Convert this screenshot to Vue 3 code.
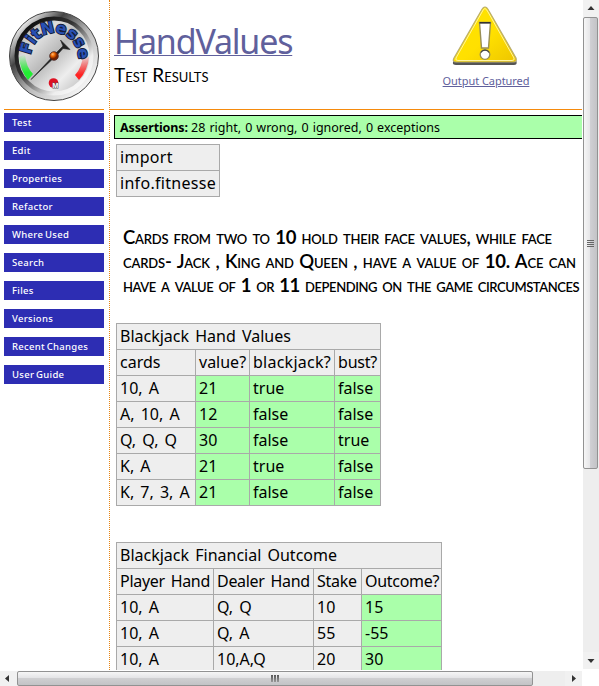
<script setup>
const links = ['Test', 'Edit', 'Properties', 'Refactor', 'Where Used', 'Search', 'Files', 'Versions', 'Recent Changes', 'User Guide']
const hands = [
  ['10, A', '21', 'true', 'false'],
  ['A, 10, A', '12', 'false', 'false'],
  ['Q, Q, Q', '30', 'false', 'true'],
  ['K, A', '21', 'true', 'false'],
  ['K, 7, 3, A', '21', 'false', 'false'],
]
const outcomes = [
  ['10, A', 'Q, Q', '10', '15'],
  ['10, A', 'Q, A', '55', '-55'],
  ['10, A', '10,A,Q', '20', '30'],
]
</script>

<template>
  <div class="window">
    <div class="viewport">
      <aside class="sidebar">
        <div class="logo">
          <svg width="92" height="92" viewBox="8 10 92 92">
            <defs>
              <linearGradient id="rim" x1="0" y1="0" x2="1" y2="1">
                <stop offset="0" stop-color="#777" />
                <stop offset=".13" stop-color="#fafafa" />
                <stop offset=".32" stop-color="#444" />
                <stop offset=".55" stop-color="#bbb" />
                <stop offset=".85" stop-color="#f4f4f4" />
                <stop offset="1" stop-color="#222" />
              </linearGradient>
              <linearGradient id="bevel" x1="0" y1="0" x2="1" y2="1">
                <stop offset="0" stop-color="#000" />
                <stop offset=".4" stop-color="#333" />
                <stop offset=".75" stop-color="#eee" />
                <stop offset="1" stop-color="#fff" />
              </linearGradient>
              <linearGradient id="face" x1="0" y1="0" x2="1" y2="1">
                <stop offset="0" stop-color="#999" />
                <stop offset=".3" stop-color="#ddd" />
                <stop offset=".48" stop-color="#bbb" />
                <stop offset=".7" stop-color="#eee" />
                <stop offset="1" stop-color="#aaa" />
              </linearGradient>
              <linearGradient id="green" x1="0" y1="0" x2="0" y2="1">
                <stop offset="0" stop-color="#2e3" stop-opacity="0" />
                <stop offset=".7" stop-color="#2e3" />
              </linearGradient>
              <linearGradient id="red" x1="0" y1="0" x2="0" y2="1">
                <stop offset="0" stop-color="#f22" stop-opacity="0" />
                <stop offset=".8" stop-color="#f22" />
              </linearGradient>
              <radialGradient id="hub" cx=".35" cy=".3">
                <stop offset="0" stop-color="#fb7" />
                <stop offset=".5" stop-color="#e60" />
                <stop offset="1" stop-color="#720" />
              </radialGradient>
              <path id="arc" d="M31 55A23.500 23.500 0 0 1 78 58" />
            </defs>
            <circle cx="54" cy="56" r="44.5" fill="url(#rim)" stroke="#444" stroke-width="1" />
            <circle cx="54" cy="56" r="37.5" fill="url(#face)" stroke="url(#bevel)" stroke-width="4" />
            <path d="M19 57Q20 70 28 80L33 74Q26 67 25 54Z" fill="url(#green)" />
            <path d="M89 57Q88 70 79 80L75 75Q82 68 83 54Z" fill="url(#red)" />
            <text class="logo-text"><textPath href="#arc" textLength="75" lengthAdjust="spacing">FitNesse</textPath></text>
            <path d="M31 79.500L57 52L63 46L60.500 40L66 45.500L70 49.500L63 48.500L58 54Z" fill="#222" stroke="#222" stroke-width=".6" />
            <circle cx="54" cy="56" r="4.300" fill="url(#hub)" stroke="#422" stroke-width=".8" />
            <circle cx="53.500" cy="83" r="4.800" fill="#d12" />
            <text x="52.500" y="88" class="mark">M</text>
          </svg>
        </div>
        <nav>
          <a v-for="link in links" :key="link">{{ link }}</a>
        </nav>
      </aside>
      <main>
        <header>
          <div class="heading">
            <h1><a>HandValues</a></h1>
            <div class="subtitle">Test Results</div>
          </div>
          <div class="captured">
            <svg width="70" height="62" viewBox="0 0 70 62">
              <defs>
                <linearGradient id="yellow" x1="0" y1="0" x2="1" y2="1">
                  <stop offset="0" stop-color="#ffe500" />
                  <stop offset=".55" stop-color="#ffe000" />
                  <stop offset="1" stop-color="#edc500" />
                </linearGradient>
              </defs>
              <path d="M35 5Q37 4 39 8L66 55Q68 60 64 60H6Q1 60 4 55L31 8Q33 5 35 5Z" fill="#555" />
              <path d="M35 2Q37 2 39 6L66 53Q67 57 64 57H6Q2 57 4 53L31 6Q33 2 35 2Z" fill="url(#yellow)" stroke="#b9ad70" stroke-width="1.200" />
              <path d="M35 3.500Q36.500 4 38 7L64 53Q65 55.500 62 55.500H8Q5 55.500 6 53L32 7Q33.500 3.500 35 3.500Z" fill="none" stroke="#fff3a0" stroke-width="1" />
              <path d="M29.500 17.500H40.500L38.500 43H31.500Z" fill="#fff" stroke="#998f55" stroke-width="1.400" />
              <path d="M29.500 17.800H40.500" stroke="#333" stroke-width="1.600" />
              <circle cx="35" cy="49.500" r="4.800" fill="#fff" stroke="#998f55" stroke-width="1.300" />
              <path d="M30.800 47.500A5 5 0 0 1 39.200 47.500" fill="none" stroke="#444" stroke-width="1.300" />
            </svg>
            <a>Output Captured</a>
          </div>
        </header>
        <div class="assertions"><b>Assertions:</b> <span>28 right, 0 wrong, 0 ignored, 0 exceptions</span></div>
        <table class="import">
          <tbody>
            <tr><td>import</td></tr>
            <tr><td>info.fitnesse</td></tr>
          </tbody>
        </table>
        <div class="prose">
          <div class="l1">Cards from two to <b>10</b> hold their face values, while face</div>
          <div class="l2">cards- Jack , King and Queen , have a value of <b>10.</b> Ace can</div>
          <div class="l3">have a value of <b>1</b> or <b>11</b> depending on the game circumstances</div>
        </div>
        <table class="hands">
          <colgroup><col class="c79" /><col class="c54" /><col class="c85" /><col class="c46" /></colgroup>
          <tbody>
            <tr><td colspan="4">Blackjack Hand Values</td></tr>
            <tr><td>cards</td><td>value?</td><td class="wide">blackjack?</td><td class="wide">bust?</td></tr>
            <tr v-for="(row, r) in hands" :key="r">
              <td v-for="(cell, c) in row" :key="c" :class="{ pass: c > 0 }">{{ cell }}</td>
            </tr>
          </tbody>
        </table>
        <table class="outcomes">
          <colgroup><col class="c97" /><col class="c100" /><col class="c48" /><col class="c80" /></colgroup>
          <tbody>
            <tr><td colspan="4">Blackjack Financial Outcome</td></tr>
            <tr class="tight"><td>Player Hand</td><td>Dealer Hand</td><td>Stake</td><td>Outcome?</td></tr>
            <tr v-for="(row, r) in outcomes" :key="r">
              <td v-for="(cell, c) in row" :key="c" :class="{ pass: c === 3 }">{{ cell }}</td>
            </tr>
          </tbody>
        </table>
      </main>
    </div>
    <div class="vbar">
      <svg class="btn" width="16" height="17" viewBox="0 0 16 17"><path d="M4.500 10L8 6L11.500 10Z" fill="#333" /></svg>
      <div class="thumb"><i></i><i></i><i></i><i></i></div>
      <div class="space"></div>
      <svg class="btn" width="16" height="17" viewBox="0 0 16 17"><path d="M4.500 7L8 11L11.500 7Z" fill="#333" /></svg>
    </div>
    <div class="hbar">
      <svg class="btn" width="17" height="15" viewBox="0 0 17 15"><path d="M9 4L5 7.500L9 11Z" fill="#333" /></svg>
      <div class="thumb"><i></i><i></i><i></i></div>
      <div class="space"></div>
      <svg class="btn" width="17" height="15" viewBox="0 0 17 15"><path d="M7 4L11 7.500L7 11Z" fill="#333" /></svg>
    </div>
  </div>
</template>

<style>
body { margin: 0; background: #fff; overflow: hidden; }
</style>

<style scoped>
.window {
  width: 599px; height: 686px; display: grid;
  grid-template-columns: 583px 16px; grid-template-rows: 670px 16px;
  font-family: "Noto Sans", "Open Sans", sans-serif; color: #000; overflow: hidden;
}
.viewport { display: flex; width: 582px; height: 670px; overflow: hidden; white-space: nowrap; }
.sidebar { width: 109px; flex: none; border-right: 1px dotted #e88410; box-sizing: content-box; }
.logo { margin: 0 5px 0 4px; padding: 10px 0 0 4px; height: 99px; border-bottom: 1px solid #f58a0c; }
.logo svg { display: block; }
.logo-text { font: bold 16px "DejaVu Sans", sans-serif; fill: #2850b4; stroke: #151c38; stroke-width: 1.800px; paint-order: stroke; }
.mark { font: bold 7px "Liberation Sans", sans-serif; fill: #fff; stroke: #555; stroke-width: 1px; paint-order: stroke; }
nav { padding: 3px 5px 0 4px; display: flex; flex-direction: column; gap: 9px; }
nav a { height: 19px; line-height: 20px; box-sizing: border-box; background: #2d2db3; color: #fff; font-size: 9.500px; font-weight: 500; letter-spacing: .3px; word-spacing: -1px; padding-left: 8px; }
main { flex: none; width: 620px; }
header { height: 109px; border-bottom: 1px solid #f58a0c; display: flex; }
.heading { width: 329px; padding: 20px 0 0 4px; }
h1 { margin: 0; font-size: 34px; line-height: 42px; font-weight: 400; letter-spacing: -1.200px; color: #60609c; }
h1 a { text-decoration: underline; text-decoration-thickness: 1px; text-underline-offset: 1px; }
.subtitle { font-family: Lato, sans-serif; font-size: 19px; line-height: 24px; font-variant: small-caps; padding-top: 1px; }
.captured { width: 86px; padding-top: 5px; display: flex; flex-direction: column; align-items: center; }
.captured svg { margin-left: -3px; }
.captured a { color: #60609c; font-size: 11px; line-height: 16px; padding-top: 6px; text-decoration: underline; letter-spacing: -.06px; }
.assertions { margin: 5px 0 0 4px; height: 22px; line-height: 24px; border: 1px solid #000; background: #afa; padding-left: 5px; font-size: 12.500px; }
.assertions b { letter-spacing: -.12px; }
.assertions span { word-spacing: .8px; }
table { border-collapse: collapse; table-layout: fixed; margin-left: 6px; font-size: 16px; word-spacing: 2px; }
td { height: 25px; line-height: 25px; padding: 0 0 0 3px; border: 1px solid #a9a9a9; background: #eee; }
td.pass { background: #afa; }
td.wide { letter-spacing: .25px; }
.hands tr:nth-child(2) .wide:last-child { letter-spacing: -.2px; }
.tight td { letter-spacing: -.3px; }
.import { width: 104px; margin-top: 5px; letter-spacing: .3px; }
.hands { width: 265px; margin-top: 26px; }
.outcomes { width: 326px; margin-top: 36px; }
.c79 { width: 79px; } .c54 { width: 54px; } .c85 { width: 85px; } .c46 { width: 46px; }
.c97 { width: 97px; } .c100 { width: 100px; } .c48 { width: 48px; } .c80 { width: 80px; }
.prose { margin: 28px 0 0 13px; font-family: Lato, sans-serif; font-size: 18.500px; line-height: 24px; font-variant: small-caps; font-weight: 600; word-spacing: 1px; }
.l1 { letter-spacing: -.24px; }
.l2 { letter-spacing: -.16px; }
.l3 { letter-spacing: -.42px; }
.prose b { font-weight: 700; }
.vbar { height: 669px; display: flex; flex-direction: column; background: #eee; }
.hbar { width: 582px; height: 15px; margin-top: 1px; display: flex; background: #eee; }
.btn { display: block; flex: none; background: #f1f1f1; }
.space { flex: 1; }
.thumb { box-sizing: border-box; border: 1px solid #929292; border-radius: 2px; display: flex; align-items: center; justify-content: center; gap: 1px; }
.vbar .thumb { height: 452px; width: 15px; flex-direction: column; background: linear-gradient(90deg, #f6f6f6, #e6e6e8 45%, #cfcfd3 50%, #c3c3c6); }
.hbar .thumb { width: 516px; height: 15px; background: linear-gradient(#f6f6f6, #e4e4e6 45%, #cfcfd1 50%, #c3c3c6); }
.vbar i { width: 7px; height: 1px; background: #666; }
.hbar i { width: 2px; height: 7px; background: linear-gradient(#555, #999); }
</style>
